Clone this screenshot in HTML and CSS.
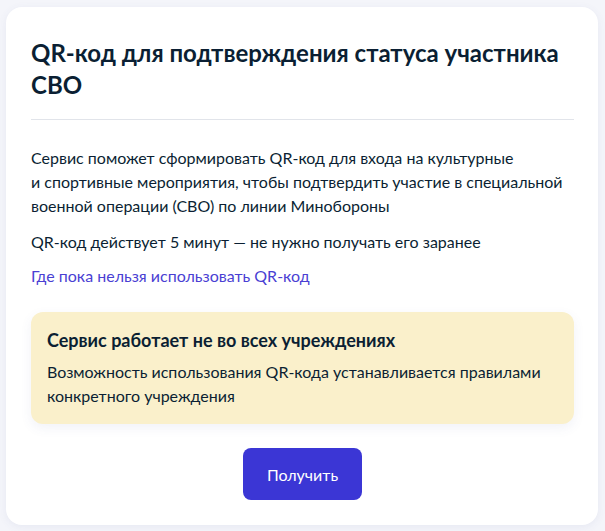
FILE: index.html
```html
<!DOCTYPE html>
<html lang="ru">
<head>
<meta charset="utf-8">
<link rel="stylesheet" href="styles.css">
</head>
<body>
<div class="card">
  <h1 class="title">QR-код для подтверждения статуса участника СВО</h1>
  <hr class="divider">
  <p class="text">Сервис поможет сформировать QR-код для входа на культурные<br>и спортивные мероприятия, чтобы подтвердить участие в специальной военной операции (СВО) по линии Минобороны</p>
  <p class="text text-last">QR-код действует 5 минут — не нужно получать его заранее</p>
  <a class="link" href="#">Где пока нельзя использовать QR-код</a>
  <div class="notice">
    <div class="notice-title">Сервис работает не во всех учреждениях</div>
    <div class="notice-text">Возможность использования QR-кода устанавливается правилами конкретного учреждения</div>
  </div>
  <div class="actions">
    <button class="btn">Получить</button>
  </div>
</div>
</body>
</html>
```
FILE: styles.css
```css
html, body {
  margin: 0;
  padding: 0;
}
body {
  background: #f4f5fa;
  font-family: Lato, "Noto Sans", sans-serif;
  color: #0b1f33;
  padding: 7px 7px 6px 6px;
  height: 531px;
  box-sizing: border-box;
}
.card {
  background: #fff;
  border-radius: 16px;
  box-shadow: 0 2px 8px rgba(80, 90, 150, 0.08);
  padding: 24px 24px 24px 25px;
  height: 518px;
  box-sizing: border-box;
}
.title {
  margin: 0;
  font-size: 24px;
  line-height: 32px;
  font-weight: 700;
  padding-top: 6px;
}
.divider {
  border: 0;
  border-top: 1px solid #e1e4ea;
  margin: 18px 0 26px 0;
}
.text {
  margin: 0 0 12px 0;
  font-size: 16px;
  line-height: 24px;
}
.text-last {
  margin-bottom: 10px;
}
.link {
  display: block;
  font-size: 16px;
  line-height: 24px;
  color: #4a3fd3;
  text-decoration: none;
}
.notice {
  margin-top: 24px;
  background: #faf0cb;
  border-radius: 12px;
  padding: 16px;
  box-shadow: 0 4px 12px rgba(80, 90, 150, 0.08);
}
.notice-title {
  font-size: 18px;
  line-height: 24px;
  font-weight: 700;
  margin-bottom: 8px;
}
.notice-text {
  font-size: 16px;
  line-height: 24px;
}
.actions {
  display: flex;
  justify-content: center;
  margin-top: 24px;
}
.btn {
  background: #3b36d5;
  color: #fff;
  border: 0;
  border-radius: 8px;
  font-family: Lato, "Noto Sans", sans-serif;
  font-size: 16px;
  width: 119px;
  height: 52px;
}
```
